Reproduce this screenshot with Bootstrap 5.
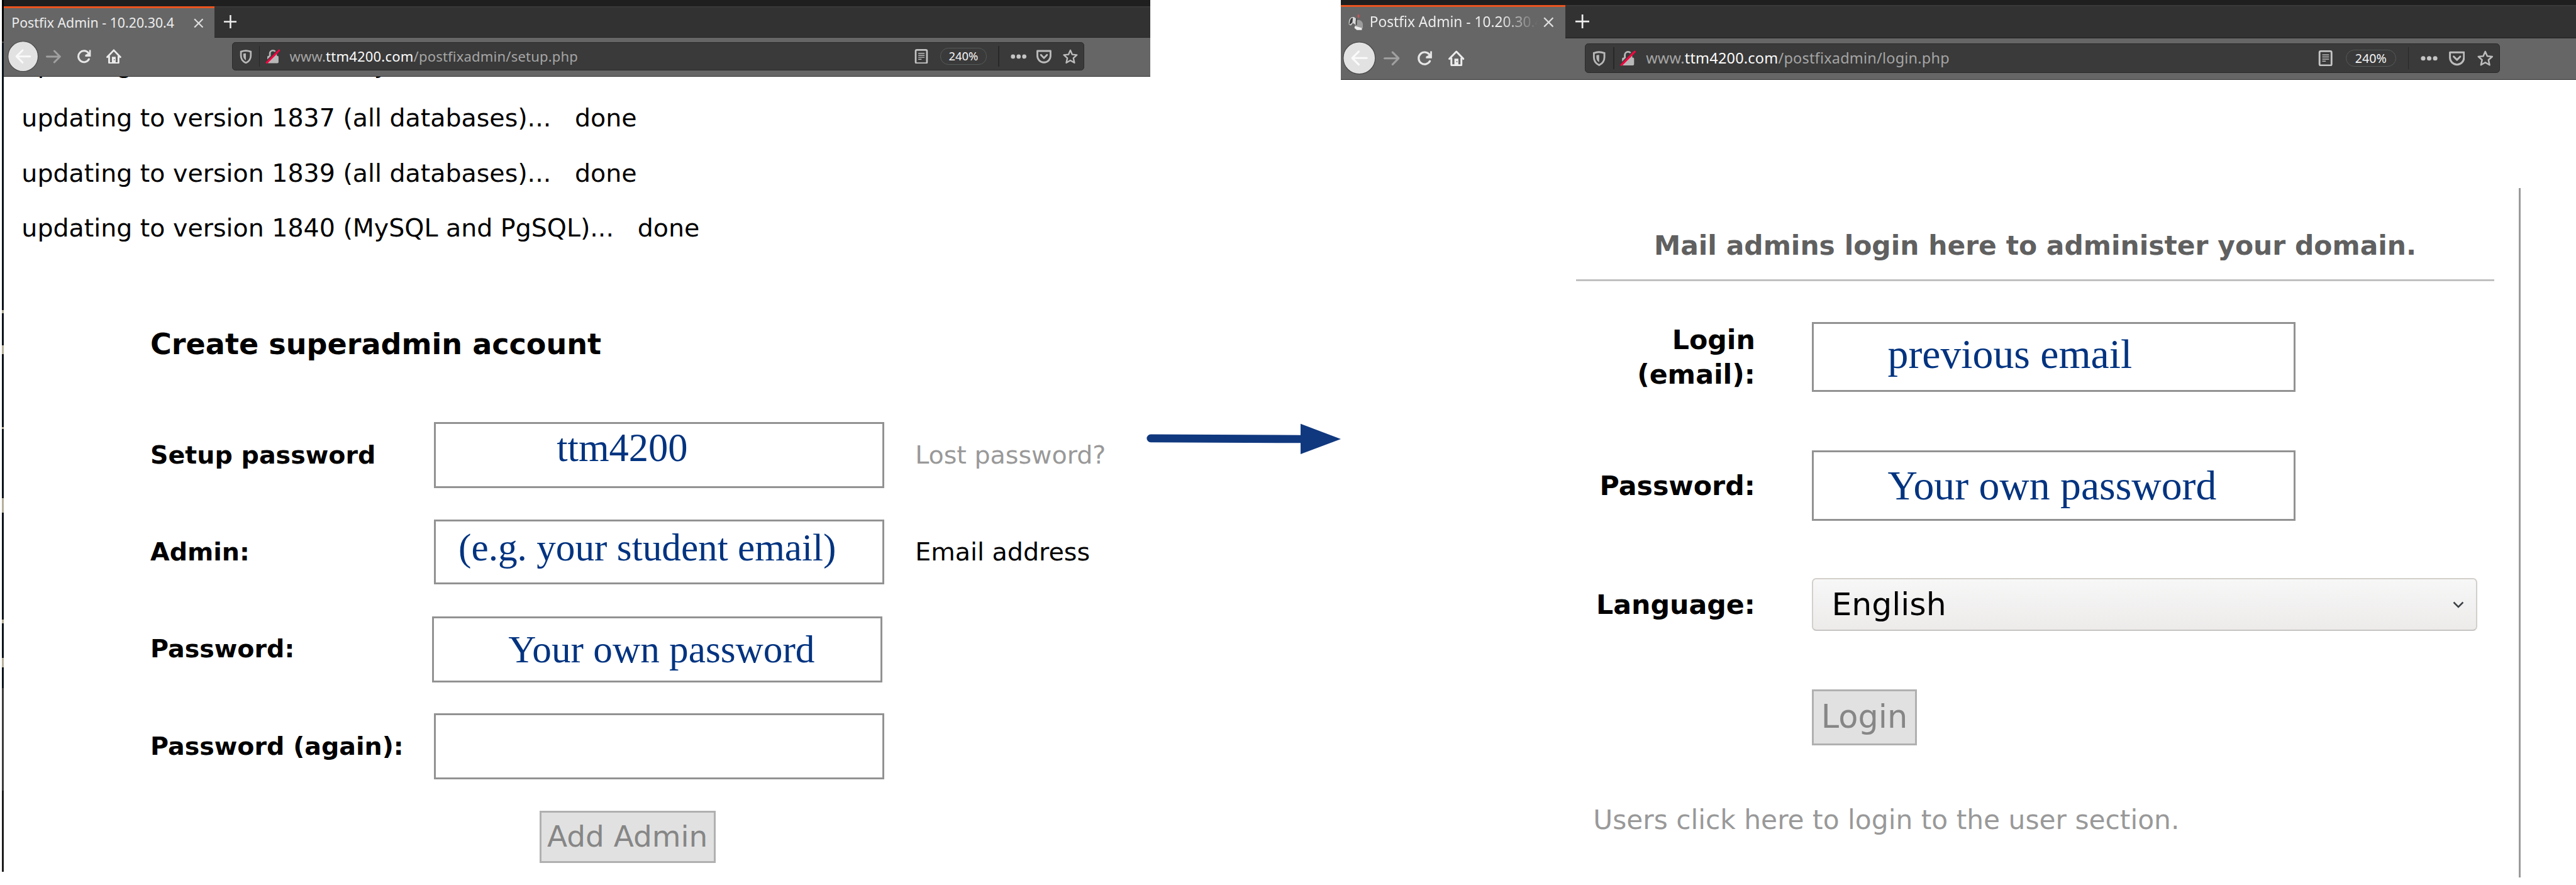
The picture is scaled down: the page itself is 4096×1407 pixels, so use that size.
<!DOCTYPE html>
<html lang="en">
<head>
<meta charset="utf-8">
<title>Postfix Admin setup and login</title>
<link href="https://cdn.jsdelivr.net/npm/bootstrap@5.3.0/dist/css/bootstrap.min.css" rel="stylesheet">
<style>
  /* 1rem = 10 design pixels */
  html { font-size: 7.4703px; }
  body { font-family: "DejaVu Sans", sans-serif; font-size: 5.3rem; line-height: 1; color: #000; background: #fff; height: 1407px; overflow: hidden; white-space: nowrap; }

  .desktop-edge { width: .4rem; height: 185.5rem; margin-left: .4rem;
    background: linear-gradient(#000 0 8.8rem, #444 8.8rem 9.1rem, #0b121a 9.1rem 66rem, #b5b09a 66rem 66.6rem, #0b121a 66.6rem 73.5rem, #b5b09a 73.5rem 75.4rem, #0b121a 75.4rem 90.9rem, #b5b09a 90.9rem 91.3rem, #0b121a 91.3rem 106rem, #b5b09a 106rem 109.1rem, #0b121a 109.1rem 131.8rem, #b5b09a 131.8rem 132.6rem, #0b121a 132.6rem 140rem, #b5b09a 140rem 142rem, #0b121a 142rem 146.5rem, #3a3a3a 146.5rem 168.2rem, #1c1c1c 168.2rem); }
  .win-setup { width: 244rem; }
  .win-login { width: 262.9rem; }
  .step-arrow { width: 40.6rem; }
  .step-arrow svg { width: 41.4rem; height: 6.6rem; margin: 90.1rem 0 0 -.8rem; }

  /* browser frame, sized in em so each window can carry its own scale */
  .chrome { font-family: "Noto Sans", "Open Sans", sans-serif; color: #ececec; }
  .win-setup .chrome { font-size: 1rem; }
  .win-login .chrome { font-size: 1.066rem; }
  .titlebar { background: #1f1f1f; }
  .win-setup .titlebar { height: 1.35rem; }
  .win-login .titlebar { height: 1.05rem; }
  .tabstrip { height: 6.65em; background: #323232; box-shadow: inset 0 .2em #3c3c3c, inset 0 -.15em #262626; }
  .browser-tab { width: 44.8em; background: #666; border-top: .45em solid #e95420; padding-left: 1.65em; padding-right: 2.3em; }
  .tab-title { font-size: 2.85em; line-height: 1.2; padding-bottom: .1em; }
  .tab-title.faded { width: 12.4em; overflow: hidden; -webkit-mask-image: linear-gradient(90deg, #000 75%, transparent 97%); mask-image: linear-gradient(90deg, #000 75%, transparent 97%); }
  .chrome svg { display: block; flex: none; }
  .ic-fav { width: 3em; height: 3.2em; margin-right: 1.2em; margin-left: -.1em; }
  .ic-x { width: 2.1em; height: 2.1em; }
  .ic-plus { width: 2.8em; height: 2.8em; margin-left: 2em; }
  .toolbar { height: 8.3em; background: #666; border-bottom: .2em solid #333; padding-left: .75em; padding-bottom: .2em; }
  .ic-back { width: 6.6em; height: 6.6em; }
  .ic { width: 3.2em; height: 3.2em; }
  .urlbar { width: 181.4em; height: 6em; background: #3a3a3a; border: .2em solid #2b2b2b; border-radius: .7em; margin-left: 23.6em; }
  .win-login .urlbar { width: 182.7em; margin-left: 24em; }
  .bar-sep { width: .2em; height: 4.4em; background: #282828; }
  .addr { font-size: 2.95em; line-height: 1.2; letter-spacing: .009em; color: #a5a5a5; margin-left: .65em; }
  .addr b { font-weight: 400; color: #fafafa; }
  .zoom-pill { width: 10em; height: 3.5em; border: 1px solid #545a57; border-radius: 1.75em; }
  .zoom-pill span { font-size: 2.47em; line-height: 1; color: #f4f4f4; }

  /* setup page */
  .page-setup { height: 169rem; overflow: hidden; padding-left: 3.8rem; }
  .log-lines { margin-top: -8.4rem; }
  .log-lines p { margin: 0; height: 11.7rem; line-height: 11.7rem; font-size: 5.29rem; }
  .log-lines p:first-child { margin-bottom: -.3rem; }
  .setup-form { padding-left: 27.4rem; }
  .setup-form h2 { font-size: 6.17rem; line-height: 7rem; font-weight: 700; margin: 15.3rem 0 13.15rem; }
  .form-line { height: 14rem; margin-bottom: 6.67rem; }
  .form-line label { width: 60.4rem; font-weight: 700; font-size: 5.3rem; }
  .hint { margin-left: 6.6rem; font-size: 5.3rem; }
  .muted-link { color: #999; text-decoration: none; }
  .field { border: 3px solid #929292; background: #fff; color: #003380; font-family: "Liberation Serif", serif; }
  .page-setup .field { width: 95.8rem; height: 14rem; font-size: 8.2rem; padding-bottom: 1.2rem; }
  .btn-flat { display: inline-flex; align-items: center; justify-content: center; background: #e1e1e1; border: 3px solid #b0b0b0; color: #868686; padding: 0; line-height: 1; }
  .btn-add { width: 37.5rem; height: 11.1rem; font-size: 6.28rem; margin-left: 82.8rem; }

  /* login page */
  .login-panel { width: 251.1rem; height: 146.7rem; margin-top: 23rem; border-right: 3px solid #9b9b9b; padding-left: 50.1rem; }
  .login-title { width: 195.4rem; height: 19.9rem; padding-top: 9.4rem; border-bottom: 3px solid #c0c0c0; color: #606060; font-weight: 700; font-size: 5.68rem; line-height: 6rem; }
  .login-line label { width: 38.1rem; margin-right: 12.1rem; text-align: right; font-weight: 700; font-size: 5.72rem; line-height: 7.3rem; }
  .page-login .field { width: 102.9rem; font-size: 8.8rem; padding-left: 15.7rem; }
  .lang-select { width: 141.6rem; height: 11.2rem; background: linear-gradient(#f7f7f7, #edebea); border: 2px solid #d3cfca; border-bottom-color: #c6c4c2; border-radius: .9rem; font-size: 6.76rem; padding: 0 2.5rem 0 3.9rem; }
  .lang-select svg { width: 2.4rem; height: 1.5rem; }
  .btn-login { width: 22.3rem; height: 11.9rem; font-size: 6.82rem; margin-left: 50.2rem; }
  .user-link { font-size: 5.67rem; line-height: 6rem; margin: 13.05rem 0 0 3.6rem; }
</style>
</head>
<body>
<svg width="0" height="0" class="position-absolute">
  <symbol id="i-x" viewBox="0 0 20 20"><path d="M1.500 1.500 18.500 18.500M18.500 1.500 1.500 18.500" stroke="#dedede" stroke-width="2.800"/></symbol>
  <symbol id="i-plus" viewBox="0 0 28 28"><path d="M14 0v28M0 14h28" stroke="#eee" stroke-width="3.400"/></symbol>
  <symbol id="i-back" viewBox="0 0 66 66"><circle cx="33" cy="33" r="32" fill="#e2e2e2" stroke="#4a4a4a" stroke-width="1.600"/><path d="M48 33H19M32 20 19 33l13 13" fill="none" stroke="#fafafa" stroke-width="4" stroke-linecap="round" stroke-linejoin="round"/></symbol>
  <symbol id="i-fwd" viewBox="0 0 32 32"><path d="M2 16h28M18 4l12 12-12 12" fill="none" stroke="#a0a0a0" stroke-width="4" stroke-linecap="round" stroke-linejoin="round"/></symbol>
  <symbol id="i-reload" viewBox="0 0 32 32"><path d="M26 21.500A12 12 0 1 1 25 8.500" fill="none" stroke="#e6e6e6" stroke-width="4" stroke-linecap="round"/><path d="M30 2v14H18v-3.500L26.500 8V2z" fill="#e6e6e6"/></symbol>
  <symbol id="i-home" viewBox="0 0 32 32"><path d="M2 17 16 2.500 30 17M6 16v12.500q0 1.500 1.500 1.500h17q1.500 0 1.500-1.500V16" fill="none" stroke="#ececec" stroke-width="3.800" stroke-linecap="round" stroke-linejoin="round"/><path d="M12 30V16.500h8V30z" fill="#ececec"/><circle cx="17" cy="22.500" r="1.200" fill="#666"/></symbol>
  <symbol id="i-shield" viewBox="0 0 32 32"><path d="M16 3.500c3.500 0 7 .8 10.500 2V14c0 7-3.500 12-10.500 15.500C9 26 5.500 21 5.500 14V5.500C9 4.300 12.500 3.500 16 3.500z" fill="none" stroke="#b8b8b8" stroke-width="3.600"/><path d="M16 9v15c-4-3-5.500-6-5.500-10V9.800z" fill="#b8b8b8"/></symbol>
  <symbol id="i-lock" viewBox="0 0 32 32"><path d="M9.500 16V9.500a6.500 6.500 0 0 1 13 0V16" fill="none" stroke="#b8b8b8" stroke-width="3.600"/><rect x="4" y="14.500" width="24" height="15.500" rx="2.500" fill="#b8b8b8"/><path d="M27 1.500 1.500 27" stroke="#3a3a3a" stroke-width="3"/><path d="M29 3 3 29" stroke="#f5043f" stroke-width="4.200" stroke-linecap="round"/></symbol>
  <symbol id="i-reader" viewBox="0 0 32 32"><rect x="4" y="1.800" width="24" height="28.400" rx="2.500" fill="none" stroke="#c4c4c4" stroke-width="3.600"/><path d="M9.500 9h13.500M9.500 13.300h13.500M9.500 17.600h13.500M9.500 21.800h7" stroke="#bdbdbd" stroke-width="1.900"/></symbol>
  <symbol id="i-dots" viewBox="0 0 34 32"><g fill="#c4c4c4"><circle cx="5" cy="16" r="4.500"/><circle cx="17" cy="16" r="4.500"/><circle cx="29" cy="16" r="4.500"/></g></symbol>
  <symbol id="i-pocket" viewBox="0 0 32 32"><path d="M2 4h28v10.500a14 14 0 0 1-28 0z" fill="none" stroke="#bcbcbc" stroke-width="3.800" stroke-linejoin="round"/><path d="M9.500 12.500 16 19l6.500-6.500" fill="none" stroke="#bcbcbc" stroke-width="3.800" stroke-linecap="round" stroke-linejoin="round"/></symbol>
  <symbol id="i-star" viewBox="0 0 32 32"><path d="M16 2.500 20 11.600l9.800 1-7.400 6.600 2.200 10L16 24.200 7.400 29.200l2.200-10L2.200 12.600l9.800-1z" fill="none" stroke="#bcbcbc" stroke-width="3.200" stroke-linejoin="round"/></symbol>
  <symbol id="i-fav" viewBox="0 0 30 32"><path d="M1 20C0 9 5 4 11 5l4 3v13l-6-4-4 5z" fill="#d8d8d8"/><path d="M2 19C3 9 6 6 9 7l-1 9-5 4z" fill="#3b3b3b"/><path d="M14 13c6-4 13-2 15 6v8l-5 2-10-5z" fill="#9c9c9c"/><path d="m13 23 14 4v4H17l-5-4z" fill="#ededed"/><path d="M16 8v13" stroke="#444" stroke-width="2"/><path d="M20 0v7M18 3h4" stroke="#c85555" stroke-width="2.500"/></symbol>
</svg>

<main class="d-flex align-items-start">
  <div class="desktop-edge flex-shrink-0"></div>

  <section class="win-setup flex-shrink-0">
    <header class="chrome">
      <div class="titlebar"></div>
      <div class="tabstrip d-flex align-items-center">
        <div class="browser-tab d-flex align-items-center justify-content-between h-100">
          <span class="tab-title">Postfix Admin - 10.20.30.4</span>
          <svg class="ic-x"><use href="#i-x"/></svg>
        </div>
        <svg class="ic-plus"><use href="#i-plus"/></svg>
      </div>
      <div class="toolbar d-flex align-items-center">
        <svg class="ic-back"><use href="#i-back"/></svg>
        <svg class="ic" style="margin-left:1.65em"><use href="#i-fwd"/></svg>
        <svg class="ic" style="margin-left:3.4em"><use href="#i-reload"/></svg>
        <svg class="ic" style="margin-left:3em"><use href="#i-home"/></svg>
        <div class="urlbar d-flex align-items-center">
          <svg class="ic" style="margin-left:1.2em"><use href="#i-shield"/></svg>
          <i class="bar-sep" style="margin-left:1.2em"></i>
          <svg class="ic" style="margin-left:1.2em"><use href="#i-lock"/></svg>
          <span class="addr">www.<b>ttm4200.com</b>/postfixadmin/setup.php</span>
          <svg class="ic ms-auto"><use href="#i-reader"/></svg>
          <div class="zoom-pill d-flex align-items-center justify-content-center" style="margin-left:2.4em"><span>240%</span></div>
          <i class="bar-sep" style="margin-left:2.4em"></i>
          <svg class="ic" style="margin-left:2.4em;width:3.4em"><use href="#i-dots"/></svg>
          <svg class="ic" style="margin-left:2.2em"><use href="#i-pocket"/></svg>
          <svg class="ic" style="margin-left:2.4em;margin-right:1.2em"><use href="#i-star"/></svg>
        </div>
      </div>
    </header>

    <div class="page-setup">
      <div class="log-lines">
        <p>updating to version 1836 (MySQL)...&nbsp;&nbsp; done</p>
        <p>updating to version 1837 (all databases)...&nbsp;&nbsp; done</p>
        <p>updating to version 1839 (all databases)...&nbsp;&nbsp; done</p>
        <p>updating to version 1840 (MySQL and PgSQL)...&nbsp;&nbsp; done</p>
      </div>
      <form class="setup-form">
        <h2>Create superadmin account</h2>
        <div class="form-line d-flex align-items-center">
          <label>Setup password</label>
          <div class="field d-flex align-items-center" style="padding-left:25.7rem;padding-bottom:3rem;font-size:8.37rem">ttm4200</div>
          <a class="hint muted-link">Lost password?</a>
        </div>
        <div class="form-line d-flex align-items-center">
          <label>Admin:</label>
          <div class="field d-flex align-items-center" style="height:13.8rem;padding-left:4.8rem;padding-bottom:1.8rem">(e.g. your student email)</div>
          <span class="hint">Email address</span>
        </div>
        <div class="form-line d-flex align-items-center">
          <label>Password:</label>
          <div class="field d-flex align-items-center" style="margin-left:-.4rem;padding-left:15.8rem;padding-bottom:0">Your own password</div>
        </div>
        <div class="form-line d-flex align-items-center">
          <label>Password (again):</label>
          <div class="field"></div>
        </div>
        <button type="button" class="btn btn-flat btn-add rounded-0">Add Admin</button>
      </form>
    </div>
  </section>

  <div class="step-arrow flex-shrink-0">
    <svg viewBox="0 0 414 66"><path d="M9 32 330 33.500" stroke="#10387f" stroke-width="17" stroke-linecap="round"/><path d="M328 1v64.500l86-32z" fill="#10387f"/></svg>
  </div>

  <section class="win-login flex-shrink-0">
    <header class="chrome">
      <div class="titlebar"></div>
      <div class="tabstrip d-flex align-items-center">
        <div class="browser-tab d-flex align-items-center h-100">
          <svg class="ic-fav"><use href="#i-fav"/></svg>
          <span class="tab-title faded">Postfix Admin - 10.20.30.4</span>
          <svg class="ic-x ms-auto"><use href="#i-x"/></svg>
        </div>
        <svg class="ic-plus"><use href="#i-plus"/></svg>
      </div>
      <div class="toolbar d-flex align-items-center">
        <svg class="ic-back" style="margin-left:-.4em"><use href="#i-back"/></svg>
        <svg class="ic" style="margin-left:1.65em"><use href="#i-fwd"/></svg>
        <svg class="ic" style="margin-left:3.4em"><use href="#i-reload"/></svg>
        <svg class="ic" style="margin-left:3.1em"><use href="#i-home"/></svg>
        <div class="urlbar d-flex align-items-center">
          <svg class="ic" style="margin-left:1.2em"><use href="#i-shield"/></svg>
          <i class="bar-sep" style="margin-left:1.2em"></i>
          <svg class="ic" style="margin-left:1.2em"><use href="#i-lock"/></svg>
          <span class="addr">www.<b>ttm4200.com</b>/postfixadmin/login.php</span>
          <svg class="ic ms-auto"><use href="#i-reader"/></svg>
          <div class="zoom-pill d-flex align-items-center justify-content-center" style="margin-left:2.4em"><span>240%</span></div>
          <i class="bar-sep" style="margin-left:2.4em"></i>
          <svg class="ic" style="margin-left:2.4em;width:3.4em"><use href="#i-dots"/></svg>
          <svg class="ic" style="margin-left:2.2em"><use href="#i-pocket"/></svg>
          <svg class="ic" style="margin-left:2.4em;margin-right:1.2em"><use href="#i-star"/></svg>
        </div>
      </div>
    </header>

    <div class="page-login">
      <form class="login-panel">
        <div class="login-title text-center">Mail admins login here to administer your domain.</div>
        <div class="login-line d-flex align-items-center" style="margin-top:8.7rem">
          <label>Login<br>(email):</label>
          <div class="field d-flex align-items-center" style="height:14.8rem;padding-bottom:1.3rem">previous email</div>
        </div>
        <div class="login-line d-flex align-items-center" style="margin-top:12.5rem">
          <label>Password:</label>
          <div class="field d-flex align-items-center" style="height:15rem;padding-bottom:.2rem">Your own password</div>
        </div>
        <div class="login-line d-flex align-items-center" style="margin-top:12.2rem">
          <label>Language:</label>
          <div class="lang-select d-flex align-items-center justify-content-between"><span>English</span>
            <svg viewBox="0 0 24 15"><path d="m2 2 10 10L22 2" fill="none" stroke="#3c4143" stroke-width="3.400"/></svg></div>
        </div>
        <div style="margin-top:12.4rem"><button type="button" class="btn btn-flat btn-login rounded-0">Login</button></div>
        <div class="user-link"><a class="muted-link">Users click here to login to the user section.</a></div>
      </form>
    </div>
  </section>
</main>
<script src="https://cdn.jsdelivr.net/npm/bootstrap@5.3.0/dist/js/bootstrap.bundle.min.js"></script>
</body>
</html>
